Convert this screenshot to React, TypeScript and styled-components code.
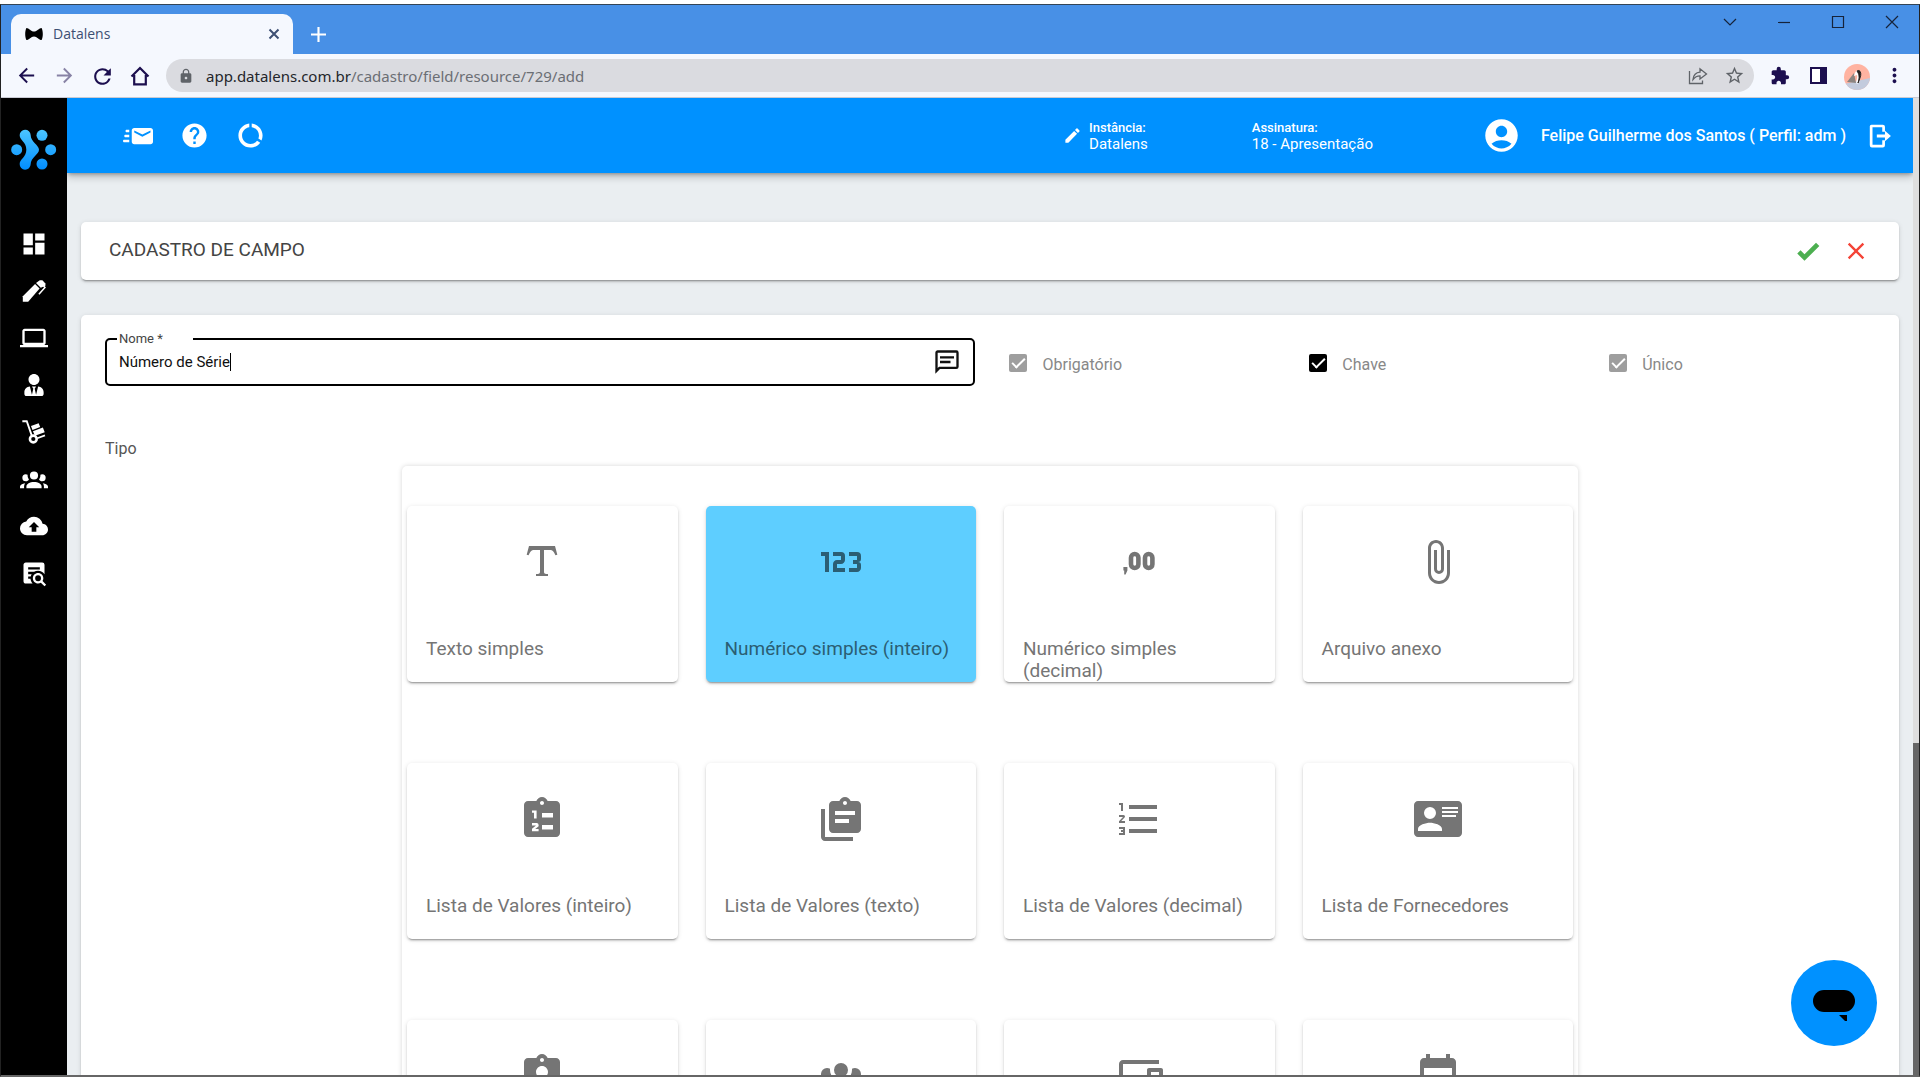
import React from "react";
import styled, { createGlobalStyle } from "styled-components";
import {
  MdAccountCircle,
  MdArrowBack,
  MdArrowForward,
  MdAssignmentInd,
  MdAttachFile,
  MdClose,
  MdDashboard,
  MdDataUsage,
  MdDevices,
  MdEdit,
  MdEvent,
  MdExtension,
  MdHelp,
  MdLaptop,
  MdLock,
  MdMoreVert,
  MdRefresh,
  MdStarOutline,
} from "react-icons/md";
import { FaUserTie } from "react-icons/fa";

const GlobalStyle = createGlobalStyle`
  *, *::before, *::after { box-sizing: border-box; }
  body { margin: 0; background: #fff; font-family: Roboto, "Liberation Sans", sans-serif; }
  button, input { font: inherit; color: inherit; }
  svg { display: block; flex: none; }
`;

const blue = "#0091ff";
const cardShadow = "0 3px 1px -2px rgba(0,0,0,.2), 0 2px 2px 0 rgba(0,0,0,.14), 0 1px 5px 0 rgba(0,0,0,.12)";

/* ---------- icons ---------- */

const PATHS = {
  emailFast:
    "M22 5.5H9C7.9 5.5 7 6.4 7 7.5V16.5C7 17.61 7.9 18.5 9 18.5H22C23.11 18.5 24 17.61 24 16.5V7.5C24 6.4 23.11 5.5 22 5.5M22 9.17L15.5 12.5L9 9.17V7.5L15.5 10.81L22 7.5V9.17M5 16.5C5 16.67 5.03 16.83 5.05 17H1C.448 17 0 16.55 0 16S.448 15 1 15H5V16.5M3 7H5.05C5.03 7.17 5 7.33 5 7.5V9H3C2.45 9 2 8.55 2 8S2.45 7 3 7M1 12C1 11.45 1.45 11 2 11H5V13H2C1.45 13 1 12.55 1 12Z",
  exit: "M5 1.5H15.5A2 2 0 0 1 17.5 3.5V8H15V4H6V20H15V16H17.5V20.5A2 2 0 0 1 15.5 22.5H5.5A2 2 0 0 1 3.5 20.5V3A1.5 1.5 0 0 1 5 1.5ZM10 10.6H17.5V7.2L23 12L17.5 16.8V13.4H10Z",
  group:
    "M12,5.5A3.5,3.5 0 0,1 15.5,9A3.5,3.5 0 0,1 12,12.5A3.5,3.5 0 0,1 8.5,9A3.5,3.5 0 0,1 12,5.5M5,8C5.56,8 6.08,8.15 6.53,8.42C6.38,9.85 6.8,11.27 7.66,12.38C7.16,13.34 6.16,14 5,14A3,3 0 0,1 2,11A3,3 0 0,1 5,8M19,8A3,3 0 0,1 22,11A3,3 0 0,1 19,14C17.84,14 16.84,13.34 16.34,12.38C17.2,11.27 17.62,9.85 17.47,8.42C17.92,8.15 18.44,8 19,8M5.5,18.25C5.5,16.18 8.41,14.5 12,14.5C15.59,14.5 18.5,16.18 18.5,18.25V20H5.5V18.25M0,20V18.5C0,17.11 1.89,15.94 4.45,15.6C3.86,16.28 3.5,17.22 3.5,18.25V20H0M24,20H20.5V18.25C20.5,17.22 20.14,16.28 19.55,15.6C22.11,15.94 24,17.11 24,18.5V20Z",
  cloud:
    "M19.35 10.04A7.49 7.49 0 0 0 12 4C9.11 4 6.6 5.64 5.35 8.04A5.994 5.994 0 0 0 0 14c0 3.31 2.69 6 6 6h13c2.76 0 5-2.24 5-5 0-2.64-2.05-4.78-4.65-4.96ZM14 13v4h-4v-4H7.5L12 8.5 16.5 13H14Z",
  docSearch:
    "M15.5,12C18,12 20,14 20,16.5C20,17.38 19.75,18.21 19.31,18.9L22.39,22L21,23.39L17.88,20.32C17.19,20.75 16.37,21 15.5,21C13,21 11,19 11,16.5C11,14 13,12 15.5,12M15.5,14A2.5,2.5 0 0,0 13,16.5A2.5,2.5 0 0,0 15.5,19A2.5,2.5 0 0,0 18,16.5A2.5,2.5 0 0,0 15.5,14M7,15V17H9C9.14,18.55 9.8,19.94 10.81,21H5C3.89,21 3,20.1 3,19V5C3,3.89 3.89,3 5,3H19A2,2 0 0,1 21,5V13.03C19.85,11.21 17.82,10 15.5,10C14.23,10 13.04,10.37 12.04,11H7V13H10C9.64,13.6 9.34,14.28 9.17,15H7M17,9V7H7V9H17Z",
  check: "M9,20.42L2.79,14.21L5.62,11.38L9,14.77L18.88,4.88L21.71,7.71L9,20.42Z",
  message:
    "M20,2A2,2 0 0,1 22,4V16A2,2 0 0,1 20,18H6L2,22V4C2,2.89 2.9,2 4,2H20M4,4V17.17L5.17,16H20V4H4M6,7H18V9H6V7M6,11H15V13H6V11Z",
  formatText:
    "M18.5,4L19.66,8.35L18.7,8.61C18.25,7.74 17.79,6.87 17.26,6.43C16.73,6 16.11,6 15.5,6H13V16.5C13,17 13,17.5 13.33,17.75C13.67,18 14.33,18 15,18V19H9V18C9.67,18 10.33,18 10.67,17.75C11,17.5 11,17 11,16.5V6H8.5C7.89,6 7.27,6 6.74,6.43C6.21,6.87 5.75,7.74 5.3,8.61L4.34,8.35L5.5,4H18.5Z",
  numeric:
    "M4,17V9H2V7H6V17H4M22,15C22,16.11 21.1,17 20,17H16V15H20V13H18V11H20V9H16V7H20A2,2 0 0,1 22,9V10.5A1.5,1.5 0 0,1 20.5,12A1.5,1.5 0 0,1 22,13.5V15M14,15V17H8V13C8,11.89 8.9,11 10,11H12V9H8V7H12A2,2 0 0,1 14,9V11C14,12.11 13.1,13 12,13H10V15H14Z",
  clipboardNumbered:
    "M19 3H14.82C14.4 1.84 13.3 1 12 1S9.6 1.84 9.18 3H5C3.9 3 3 3.9 3 5V19C3 20.1 3.9 21 5 21H19C20.1 21 21 20.1 21 19V5C21 3.9 20.1 3 19 3ZM12 3C12.55 3 13 3.45 13 4S12.55 5 12 5 11 4.55 11 4 11.45 3 12 3ZM12 9H17.5V11.2H12ZM12 15H17.5V17.2H12ZM7 7.7H9.3V11.8H8V8.9H7ZM7 14H9.3A1 1 0 0 1 10.3 15V15.6L8.6 17H10.3V18.1H7V16.9L9 15.2H7Z",
  clipboardMultiple:
    "M4 7V21H18V23H4C2.9 23 2 22.1 2 21V7H4ZM20 3C21.1 3 22 3.9 22 5V17C22 18.1 21.1 19 20 19H8C6.9 19 6 18.1 6 17V5C6 3.9 6.9 3 8 3H11.18C11.6 1.84 12.7 1 14 1C15.3 1 16.4 1.84 16.82 3H20ZM14 3C13.45 3 13 3.45 13 4C13 4.55 13.45 5 14 5C14.55 5 15 4.55 15 4C15 3.45 14.55 3 14 3ZM9 8V10H19V8ZM9 12V14H16V12Z",
  listNumbered:
    "M7,13V11H21V13H7M7,19V17H21V19H7M7,7V5H21V7H7M3,8V5H2V4H4V8H3M2,17V16H5V20H2V19H4V18.5H3V17.5H4V17H2M4.25,10A0.75,0.75 0 0,1 5,10.75C5,10.95 4.92,11.14 4.79,11.27L3.12,13H5V14H2V13.08L4,11H2V10H4.25Z",
  accountCard:
    "M2,3H22C23.05,3 24,3.95 24,5V19C24,20.05 23.05,21 22,21H2C0.95,21 0,20.05 0,19V5C0,3.95 .95,3 2,3M14,6V7H22V6H14M14,8V9H22V8H14M14,10V11H21V10H14M8,13.91C6,13.91 2,15 2,17V18H14V17C14,15 10,13.91 8,13.91M8,6A3,3 0 0,0 5,9A3,3 0 0,0 8,12A3,3 0 0,0 11,9A3,3 0 0,0 8,6Z",
};

function Glyph({ name, size }: { name: keyof typeof PATHS; size: number }) {
  return (
    <svg width={size} height={size} viewBox="0 0 24 24" fill="currentColor" fillRule="evenodd" aria-hidden="true">
      <path d={PATHS[name]} />
    </svg>
  );
}

const DecimalIcon = () => (
  <svg width="48" height="48" viewBox="0 0 48 48" fill="none" stroke="currentColor" strokeWidth="4.6" aria-hidden="true">
    <rect x="16" y="16" width="7.4" height="14" rx="3.7" />
    <rect x="30" y="16" width="7.4" height="14" rx="3.7" />
    <path d="M8.4 29h4v3.4l-1.8 4H9.2v-3.8h-.8z" fill="currentColor" stroke="none" />
  </svg>
);

const PenIcon = () => (
  <svg width="28" height="28" viewBox="0 0 24 24" aria-hidden="true">
    <path d="M2.4 21.2V16.6L12.9 6L16.8 9.9L7 21.2Z" fill="#fff" />
    <path d="M13.7 5.2L17 2.8H19.2L21.8 5.6V7.4L17.8 9.2Z" fill="#fff" />
    <path d="M19.4 6.4L21.4 9L16.2 14.8" fill="none" stroke="#fff" strokeWidth="1.3" />
  </svg>
);

const DollyIcon = () => (
  <svg width="28" height="28" viewBox="0 0 24 24" fill="#fff" aria-hidden="true">
    <path d="M2 2.8H5.8L10.4 16" fill="none" stroke="#fff" strokeWidth="1.6" />
    <path d="M9.4 6.8L16 4.4L17.3 7.8L10.7 10.3ZM11.1 11.4L19.6 8.2L21.2 12.2L12.8 15.2Z" />
    <path d="M14.8 17.4L21.4 14.9" stroke="#fff" strokeWidth="1.4" />
    <circle cx="11.4" cy="18" r="2.9" fill="#000" stroke="#fff" strokeWidth="2.2" />
  </svg>
);

const Logo = () => (
  <svg width="46" height="42" viewBox="34 119 138 124" role="img" aria-label="Datalens">
    <defs>
      <linearGradient id="brand" gradientUnits="userSpaceOnUse" x1="0" y1="119" x2="0" y2="243">
        <stop offset="0" stopColor="#4cc6ff" />
        <stop offset="1" stopColor="#008cff" />
      </linearGradient>
    </defs>
    <g fill="url(#brand)">
      <circle cx="127" cy="137" r="16.5" />
      <circle cx="51" cy="180" r="16.5" />
      <circle cx="153" cy="180" r="16.5" />
      <circle cx="127" cy="223" r="16.5" />
      <path d="M60 137A16.5 16.5 0 0 1 93 136C93 157 118 166 118 180C118 194 93 203 93 224A16.5 16.5 0 0 1 60 223C60 208 80 203 80 180C80 157 60 152 60 137Z" />
    </g>
  </svg>
);

/* ---------- browser frame ---------- */

const Screen = styled.div`
  height: 100vh;
  min-height: 600px;
  padding: 4px 0 3px;
  background: #fff;
`;

const Browser = styled.div`
  display: flex;
  flex-direction: column;
  height: 100%;
  border: 1px solid #222;
  border-top-color: #345;
  border-bottom: 2px solid #666;
  overflow: hidden;
`;

const TabStrip = styled.div`
  display: flex;
  flex: none;
  height: 49px;
  padding: 9px 18px 0 10px;
  background: #4890e6;
`;

const Tab = styled.div`
  display: flex;
  align-items: center;
  width: 282px;
  padding: 0 13px 0 14px;
  gap: 10px;
  border-radius: 10px 10px 0 0;
  background: #f5f8fe;
  color: #3c4f73;
  font: 14px/20px "Open Sans", "Noto Sans", sans-serif;
`;

const TabTitle = styled.span`
  flex: 1;
`;

const PlainButton = styled.button`
  display: grid;
  place-items: center;
  flex: none;
  padding: 0;
  border: 0;
  background: none;
  cursor: pointer;
`;

const NewTab = styled(PlainButton)`
  width: 51px;
  color: #fff;
`;

const WindowButtons = styled.div`
  display: flex;
  margin-left: auto;
  gap: 36px;
  height: 16px;
`;

const WindowButton = styled(PlainButton)`
  width: 18px;
  height: 16px;
`;

const Toolbar = styled.div`
  display: flex;
  flex: none;
  align-items: center;
  gap: 14px;
  height: 44px;
  padding: 0 13px;
  border-bottom: 1px solid #c9cad3;
  background: #f5f8fe;
  color: #1c0f4f;
`;

const ToolButton = styled(PlainButton)<{ $dim?: boolean }>`
  width: 24px;
  height: 24px;
  opacity: ${(p) => (p.$dim ? 0.5 : 1)};
`;

const Address = styled.div`
  display: flex;
  flex: 1;
  align-items: center;
  gap: 12px;
  height: 33px;
  padding: 0 8px 0 12px;
  border-radius: 17px;
  background: #dadbe0;
  color: #5f6368;
`;

const Url = styled.span`
  flex: 1;
  color: #6b6e74;
  font: 15px/22px "Noto Sans", "Open Sans", sans-serif;
  b {
    color: #24262b;
    font-weight: 400;
  }
`;

/* ---------- application ---------- */

const Viewport = styled.div`
  display: flex;
  flex: 1;
  min-height: 0;
`;

const Sidebar = styled.aside`
  display: flex;
  flex: none;
  flex-direction: column;
  align-items: center;
  gap: 59px;
  width: 66px;
  padding-top: 31px;
  background: #000;
`;

const SideNav = styled.nav`
  display: flex;
  flex-direction: column;
  gap: 19px;
`;

const SideLink = styled.a`
  display: grid;
  place-items: center;
  width: 28px;
  height: 28px;
  color: #fff;
`;

const Page = styled.div`
  display: flex;
  flex: 1;
  flex-direction: column;
  min-width: 0;
  overflow: hidden;
  background: #eaeef1;
`;

const TopBar = styled.header`
  display: flex;
  flex: none;
  align-items: center;
  height: 75px;
  padding: 0 21px 0 56px;
  background: ${blue};
  color: #fff;
  box-shadow: 0 2px 4px -1px rgba(0, 0, 0, 0.3), 0 4px 8px rgba(0, 0, 0, 0.2);
`;

const TopActions = styled.div`
  display: flex;
  flex: 1;
  gap: 26px;
`;

const TopAction = styled(PlainButton)`
  width: 30px;
  height: 30px;
`;

const Context = styled.div`
  display: flex;
  align-items: center;
  gap: 7px;
  margin-right: 104px;
`;

const ContextText = styled.div`
  display: flex;
  flex-direction: column;
  font-size: 15px;
  font-weight: 400;
  line-height: 16px;
  strong {
    font-size: 13px;
    font-weight: 500;
  }
`;

const User = styled.div`
  display: flex;
  align-items: center;
  gap: 20px;
  margin-left: 5px;
  font-size: 16px;
  font-weight: 500;
`;

const Content = styled.main`
  display: flex;
  flex-direction: column;
  flex: 1;
  gap: 35px;
  min-height: 0;
  padding: 49px 14px 0;
`;

const TitleCard = styled.section`
  display: flex;
  flex: none;
  align-items: center;
  height: 58px;
  padding: 0 29px 0 28px;
  border-radius: 5px;
  background: #fff;
  box-shadow: ${cardShadow};
`;

const Title = styled.h1`
  flex: 1;
  margin: 0;
  padding-bottom: 2px;
  color: #444;
  font-size: 19px;
  font-weight: 400;
  line-height: 24px;
`;

const TitleActions = styled.div`
  display: flex;
  gap: 20px;
`;

const TitleAction = styled(PlainButton)<{ $color: string }>`
  width: 28px;
  height: 28px;
  color: ${(p) => p.$color};
`;

const FormCard = styled.form`
  flex: none;
  padding: 17px 24px 24px;
  border-radius: 5px;
  background: #fff;
  box-shadow: ${cardShadow};
`;

const FieldRow = styled.div`
  display: grid;
  grid-template-columns: 871fr 270fr 270fr 270fr;
  align-items: start;
  column-gap: 30px;
`;

const NameField = styled.fieldset`
  min-width: 0;
  margin: 0;
  padding: 0 12px;
  border: 2px solid #000;
  border-radius: 5px;
  legend {
    margin-left: -2px;
    padding: 0 30px 0 2px;
    color: #444;
    font-size: 13px;
    line-height: 14px;
  }
`;

const NameControl = styled.div`
  display: flex;
  align-items: center;
  height: 38px;
  padding-bottom: 6px;
  color: #111;
`;

const NameInput = styled.input`
  field-sizing: content;
  max-width: 90%;
  padding: 0;
  border: 0;
  outline: 0;
  background: none;
  font-size: 15px;
  line-height: 20px;
`;

const Caret = styled.span`
  width: 1px;
  height: 18px;
  background: #000;
`;

const HintButton = styled(PlainButton)`
  margin-left: auto;
`;

const Option = styled.label`
  display: flex;
  align-items: center;
  gap: 15px;
  height: 24px;
  margin-top: 20px;
  padding-left: 4px;
  color: #888;
  font-size: 16px;
`;

const Tick = styled.input`
  appearance: none;
  width: 18px;
  height: 18px;
  margin: 0 0 2px;
  border-radius: 2px;
  background: ${(p) => (p.disabled ? "#9e9e9e" : "#000")};
  display: grid;
  place-items: center;
  &:checked::before {
    content: "";
    width: 13px;
    height: 7px;
    margin-bottom: 4px;
    border: solid #fff;
    border-width: 0 0 2px 2px;
    transform: rotate(-45deg);
  }
`;

const TypeHeading = styled.h2`
  margin: 53px 0 7px;
  color: #555;
  font-size: 16px;
  font-weight: 400;
  line-height: 20px;
`;

const TypePanel = styled.div`
  display: grid;
  grid-template-columns: repeat(4, 1fr);
  gap: 81px 28px;
  width: 100%;
  max-width: 1176px;
  margin: 0 auto;
  padding: 40px 5px;
  border-radius: 5px;
  box-shadow: 0 0 5px rgba(0, 0, 0, 0.16);
`;

const TypeCard = styled.button<{ $selected?: boolean }>`
  display: flex;
  flex-direction: column;
  align-items: flex-start;
  justify-content: flex-start;
  gap: 52px;
  height: 176px;
  padding: 32px 19px 0;
  border: 0;
  border-radius: 5px;
  background: ${(p) => (p.$selected ? "#5eceff" : "#fff")};
  box-shadow: ${cardShadow};
  color: ${(p) => (p.$selected ? "#2b5e74" : "#757575")};
  font-size: 19px;
  line-height: 22px;
  text-align: left;
  cursor: pointer;
  svg {
    align-self: center;
  }
`;

const ScrollTrack = styled.div`
  display: flex;
  flex: none;
  flex-direction: column;
  justify-content: flex-end;
  width: 6px;
  background: #dedede;
`;

const ScrollThumb = styled.div`
  height: 34%;
  background: #666;
`;

const ChatButton = styled.button`
  position: fixed;
  right: 43px;
  bottom: 34px;
  display: grid;
  place-items: center;
  width: 86px;
  height: 86px;
  padding: 0;
  border: 0;
  border-radius: 50%;
  background: ${blue};
  cursor: pointer;
`;

const sideItems = [
  { id: "painel", icon: <MdDashboard size={28} /> },
  { id: "editar", icon: <PenIcon /> },
  { id: "equipamentos", icon: <MdLaptop size={28} /> },
  { id: "responsavel", icon: <FaUserTie size={22} /> },
  { id: "logistica", icon: <DollyIcon /> },
  { id: "equipes", icon: <Glyph name="group" size={28} /> },
  { id: "envio", icon: <Glyph name="cloud" size={28} /> },
  { id: "consulta", icon: <Glyph name="docSearch" size={28} /> },
];

const types: { label?: string; icon: React.ReactNode; selected?: boolean }[] = [
  { label: "Texto simples", icon: <Glyph name="formatText" size={48} /> },
  { label: "Numérico simples (inteiro)", icon: <Glyph name="numeric" size={48} />, selected: true },
  { label: "Numérico simples (decimal)", icon: <DecimalIcon /> },
  { label: "Arquivo anexo", icon: <MdAttachFile size={48} /> },
  { label: "Lista de Valores (inteiro)", icon: <Glyph name="clipboardNumbered" size={48} /> },
  { label: "Lista de Valores (texto)", icon: <Glyph name="clipboardMultiple" size={48} /> },
  { label: "Lista de Valores (decimal)", icon: <Glyph name="listNumbered" size={48} /> },
  { label: "Lista de Fornecedores", icon: <Glyph name="accountCard" size={48} /> },
  { icon: <MdAssignmentInd size={48} /> },
  { icon: <Glyph name="group" size={48} /> },
  { icon: <MdDevices size={48} /> },
  { icon: <MdEvent size={48} /> },
];

const options = [
  { id: "obrigatorio", label: "Obrigatório", disabled: true },
  { id: "chave", label: "Chave", disabled: false },
  { id: "unico", label: "Único", disabled: true },
];

function BrowserChrome() {
  return (
    <>
      <TabStrip>
        <Tab>
          <svg width="18" height="12" viewBox="0 0 18 12" aria-hidden="true">
            <path d="M1.4 0C4 0 6 3.6 9 3.6S14 0 16.6 0C18.2 3 18.2 9 16.6 12C14 12 12 8.4 9 8.4S4 12 1.4 12C-.2 9-.2 3 1.4 0Z" />
          </svg>
          <TabTitle>Datalens</TabTitle>
          <PlainButton type="button">
            <svg width="12" height="12" viewBox="0 0 12 12" stroke="#3c4f73" strokeWidth="2" aria-hidden="true">
              <path d="M1.5 1.5L10.5 10.5M10.5 1.5L1.5 10.5" />
            </svg>
          </PlainButton>
        </Tab>
        <NewTab type="button">
          <svg width="15" height="15" viewBox="0 0 14 14" stroke="currentColor" strokeWidth="2" aria-hidden="true">
            <path d="M7 0V14M0 7H14" />
          </svg>
        </NewTab>
        <WindowButtons>
          {["M3 5L9 11L15 5", "M3 8.5H15", "M3.5 2.5H14.5V13.5H3.5Z", "M3 2L15 14M15 2L3 14"].map((d) => (
            <WindowButton type="button" key={d}>
              <svg width="18" height="16" viewBox="0 0 18 16" fill="none" stroke="#16233a" strokeWidth="1.2" aria-hidden="true">
                <path d={d} />
              </svg>
            </WindowButton>
          ))}
        </WindowButtons>
      </TabStrip>
      <Toolbar>
        <ToolButton type="button"><MdArrowBack size={23} /></ToolButton>
        <ToolButton type="button" $dim><MdArrowForward size={23} /></ToolButton>
        <ToolButton type="button"><MdRefresh size={25} /></ToolButton>
        <ToolButton type="button">
          <svg width="20" height="20" viewBox="0 0 20 20" fill="none" stroke="currentColor" strokeWidth="2.2" aria-hidden="true">
            <path d="M1.5 10.5L10 2L18.5 10.5M4.2 9V18.4H15.8V9" />
          </svg>
        </ToolButton>
        <Address>
          <MdLock size={16} />
          <Url><b>app.datalens.com.br</b>/cadastro/field/resource/729/add</Url>
          <ToolButton type="button">
            <svg width="20" height="18" viewBox="0 0 20 18" fill="none" stroke="currentColor" strokeWidth="1.3" aria-hidden="true">
              <path d="M1.5 4V16.5H14.5V13.5M5 12.5C5.5 8 8 5.5 12 5.2V1.8L18.5 7L12 12V8.8C9 8.8 7 9.8 5 12.5Z" />
            </svg>
          </ToolButton>
          <ToolButton type="button"><MdStarOutline size={21} /></ToolButton>
        </Address>
        <ToolButton type="button"><MdExtension size={20} /></ToolButton>
        <ToolButton type="button">
          <svg width="17" height="17" viewBox="0 0 17 17" aria-hidden="true">
            <rect x="1" y="1" width="15" height="15" fill="#fff" stroke="currentColor" strokeWidth="2" />
            <path d="M10 0H17V17H10Z" fill="currentColor" />
          </svg>
        </ToolButton>
        <ToolButton type="button">
          <svg width="26" height="26" viewBox="0 0 26 26" aria-hidden="true">
            <clipPath id="face"><circle cx="13" cy="13" r="13" /></clipPath>
            <g clipPath="url(#face)">
              <rect width="26" height="26" fill="#ffb3a1" />
              <path d="M0 20L26 14V26H0Z" fill="#c3cbdd" />
              <path d="M3 18L10 9L12 19Z" fill="#8c8480" />
              <path d="M10 12C11 6 15 4 17 9C17 14 15 19 13 20C11 18 14 14 13 11Z" fill="#fff" />
              <path d="M13 7C16 5 18 9 16 14L14 19C16 13 15 10 13 7Z" fill="#2b2422" stroke="#2b2422" />
            </g>
          </svg>
        </ToolButton>
        <ToolButton type="button"><MdMoreVert size={23} /></ToolButton>
      </Toolbar>
    </>
  );
}

export default function App() {
  return (
    <Screen>
      <GlobalStyle />
      <Browser>
        <BrowserChrome />
        <Viewport>
          <Sidebar>
            <Logo />
            <SideNav>
              {sideItems.map((item) => (
                <SideLink key={item.id} href={`#${item.id}`}>{item.icon}</SideLink>
              ))}
            </SideNav>
          </Sidebar>
          <Page>
            <TopBar>
              <TopActions>
                <TopAction type="button"><Glyph name="emailFast" size={30} /></TopAction>
                <TopAction type="button"><MdHelp size={29} /></TopAction>
                <TopAction type="button"><MdDataUsage size={29} /></TopAction>
              </TopActions>
              <Context>
                <MdEdit size={19} />
                <ContextText><strong>Instância:</strong>Datalens</ContextText>
              </Context>
              <Context>
                <ContextText><strong>Assinatura:</strong>18 - Apresentação</ContextText>
              </Context>
              <User>
                <MdAccountCircle size={39} />
                <span>Felipe Guilherme dos Santos ( Perfil: adm )</span>
                <PlainButton type="button"><Glyph name="exit" size={26} /></PlainButton>
              </User>
            </TopBar>
            <Content>
              <TitleCard>
                <Title>CADASTRO DE CAMPO</Title>
                <TitleActions>
                  <TitleAction type="submit" form="campo" $color="#4caf50"><Glyph name="check" size={28} /></TitleAction>
                  <TitleAction type="button" $color="#f44336"><MdClose size={28} /></TitleAction>
                </TitleActions>
              </TitleCard>
              <FormCard id="campo">
                <FieldRow>
                  <NameField>
                    <legend><label htmlFor="nome">Nome *</label></legend>
                    <NameControl>
                      <NameInput id="nome" type="text" defaultValue="Número de Série" />
                      <Caret />
                      <HintButton type="button"><Glyph name="message" size={28} /></HintButton>
                    </NameControl>
                  </NameField>
                  {options.map((o) => (
                    <Option key={o.id} htmlFor={o.id}>
                      <Tick id={o.id} type="checkbox" defaultChecked disabled={o.disabled} />
                      {o.label}
                    </Option>
                  ))}
                </FieldRow>
                <TypeHeading>Tipo</TypeHeading>
                <TypePanel>
                  {types.map((t, i) => (
                    <TypeCard type="button" key={i} $selected={t.selected} aria-pressed={!!t.selected}>
                      {t.icon}
                      {t.label && <span>{t.label}</span>}
                    </TypeCard>
                  ))}
                </TypePanel>
              </FormCard>
            </Content>
          </Page>
          <ScrollTrack>
            <ScrollThumb />
          </ScrollTrack>
        </Viewport>
      </Browser>
      <ChatButton type="button">
        <svg width="44" height="36" viewBox="0 0 44 36" aria-hidden="true">
          <rect x="1" y="5" width="42" height="22" rx="11" />
          <path d="M27 30H35V38Z" />
        </svg>
      </ChatButton>
    </Screen>
  );
}
